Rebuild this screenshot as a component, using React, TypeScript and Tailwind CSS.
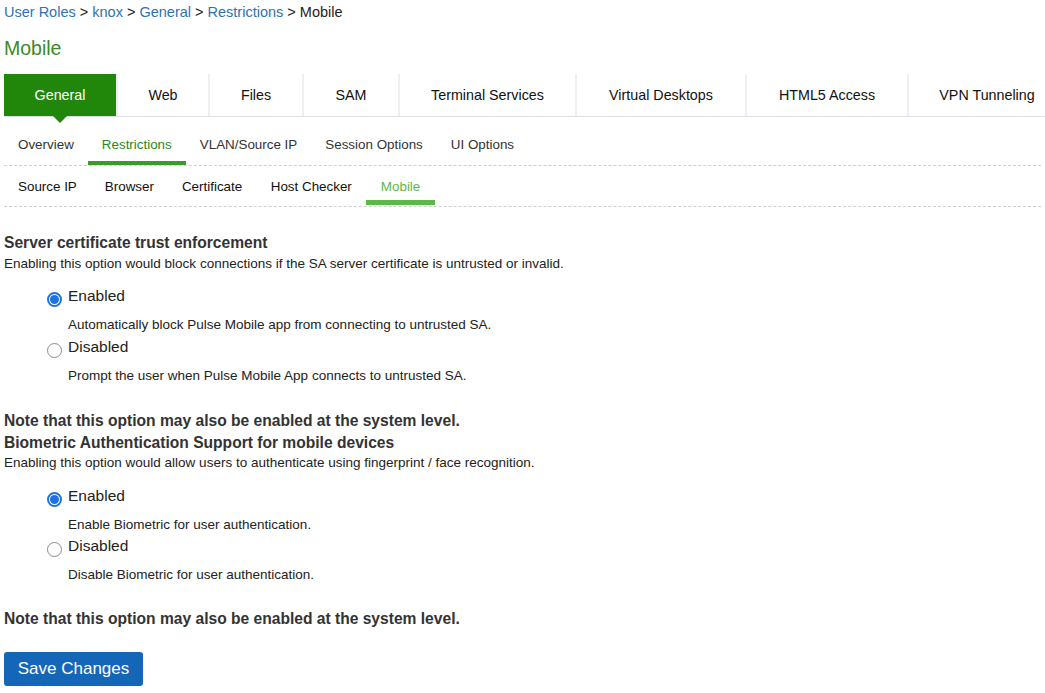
import React from "react";

const tabs = [
  { label: "General", w: 112 },
  { label: "Web", w: 92 },
  { label: "Files", w: 94 },
  { label: "SAM", w: 96 },
  { label: "Terminal Services", w: 177 },
  { label: "Virtual Desktops", w: 170 },
  { label: "HTML5 Access", w: 162 },
  { label: "VPN Tunneling", w: 158 },
];

function Radio({ checked }: { checked: boolean }) {
  return checked ? (
    <span className="mt-[5px] flex h-[15px] w-[15px] shrink-0 items-center justify-center rounded-full border-[2px] border-[#1a73e8] bg-white">
      <span className="h-[9px] w-[9px] rounded-full bg-[#1a73e8]" />
    </span>
  ) : (
    <span className="mt-[5px] h-[15px] w-[15px] shrink-0 rounded-full border border-[#8a8a8a] bg-white" />
  );
}

function Option({ checked, label, help, tight }: { checked: boolean; label: string; help: string; tight?: boolean }) {
  return (
    <div className={tight ? "pb-[3px] pl-[43px]" : "pb-[4px] pl-[43px]"}>
      <div className="flex h-[22px] items-start gap-[6px]">
        <Radio checked={checked} />
        <span className="text-[15.5px] leading-[18px] text-[#222]">{label}</span>
      </div>
      <div className="mt-[7px] pl-[21px] text-[13.5px] leading-[18px] text-[#222]">{help}</div>
    </div>
  );
}

export default function App() {
  return (
    <div className="min-h-[693px] w-[1045px] overflow-hidden bg-white font-['Liberation_Sans',Arial,sans-serif] text-[#222]">
      <div className="px-[4px] pt-[3px] text-[14.5px] leading-[18px]">
        <span className="text-[#2f72b3]">User Roles</span>
        <span> &gt; </span>
        <span className="text-[#2f72b3]">knox</span>
        <span> &gt; </span>
        <span className="text-[#2f72b3]">General</span>
        <span> &gt; </span>
        <span className="text-[#2f72b3]">Restrictions</span>
        <span> &gt; </span>
        <span className="text-[#222]">Mobile</span>
      </div>
      <div className="mt-[16px] px-[4px] text-[19.5px] leading-[22px] text-[#3b8a26]">Mobile</div>

      <div className="mt-[15px] ml-[4px] flex h-[43px] border-b border-[#dcdfe6]">
        {tabs.map((t, i) => (
          <div
            key={t.label}
            style={{ width: t.w }}
            className={
              i === 0
                ? "relative flex shrink-0 items-center justify-center bg-[#21870b] pt-[2px] text-[14.3px] text-white"
                : "flex shrink-0 items-center justify-center border-l-2 border-[#efefef] pt-[2px] text-[14.3px] text-[#111]"
            }
          >
            {t.label}
            {i === 0 && (
              <span className="absolute bottom-[-7px] left-1/2 h-0 w-0 -translate-x-1/2 border-x-[7px] border-t-[7px] border-x-transparent border-t-[#21870b]" />
            )}
          </div>
        ))}
      </div>

      <div className="mx-[4px] flex h-[49px] items-end border-b border-dashed border-[#cfcfcf] text-[13.4px] leading-[16px] text-[#333]">
        <div className="flex h-[32px] items-start px-[14px] pt-[4px]">Overview</div>
        <div className="flex h-[32px] items-start border-b-[4px] border-[#3a9a2a] px-[14px] pt-[4px] text-[#2b8a1c]">Restrictions</div>
        <div className="flex h-[32px] items-start px-[14px] pt-[4px]">VLAN/Source IP</div>
        <div className="flex h-[32px] items-start px-[14px] pt-[4px]">Session Options</div>
        <div className="flex h-[32px] items-start px-[14px] pt-[4px]">UI Options</div>
      </div>

      <div className="mx-[4px] flex h-[41px] items-end border-b border-dashed border-[#cfcfcf] text-[13.4px] leading-[16px] text-[#111]">
        <div className="mb-[1px] flex h-[34px] items-start px-[14px] pt-[8px]">Source IP</div>
        <div className="mb-[1px] flex h-[34px] items-start px-[14px] pt-[8px]">Browser</div>
        <div className="mb-[1px] flex h-[34px] items-start px-[14px] pt-[8px]">Certificate</div>
        <div className="mb-[1px] flex h-[34px] items-start px-[14.5px] pt-[8px]">Host Checker</div>
        <div className="mb-[1px] flex h-[34px] items-start border-b-[5px] border-[#5cb84a] px-[14.5px] pt-[8px] text-[#5cb84a]">Mobile</div>
      </div>

      <div className="px-[4px]">
        <div className="mt-[26px] text-[15.6px] font-bold leading-[20px] text-[#333]">Server certificate trust enforcement</div>
        <div className="mt-[3px] text-[13.5px] leading-[16px] text-[#222]">
          Enabling this option would block connections if the SA server certificate is untrusted or invalid.
        </div>
        <div className="mt-[15px]">
          <Option checked label="Enabled" help="Automatically block Pulse Mobile app from connecting to untrusted SA." />
          <Option checked={false} label="Disabled" help="Prompt the user when Pulse Mobile App connects to untrusted SA." />
        </div>
        <div className="mt-[22px] text-[15.6px] font-bold leading-[20px] text-[#333]">
          Note that this option may also be enabled at the system level.
        </div>
        <div className="mt-[2px] text-[15.6px] font-bold leading-[20px] text-[#333]">Biometric Authentication Support for mobile devices</div>
        <div className="mt-[2px] text-[13.5px] leading-[16px] text-[#222]">
          Enabling this option would allow users to authenticate using fingerprint / face recognition.
        </div>
        <div className="mt-[16px]">
          <Option checked tight label="Enabled" help="Enable Biometric for user authentication." />
          <Option checked={false} tight label="Disabled" help="Disable Biometric for user authentication." />
        </div>
        <div className="mt-[22px] text-[15.6px] font-bold leading-[20px] text-[#333]">
          Note that this option may also be enabled at the system level.
        </div>
        <button className="mt-[23px] h-[34px] w-[139px] rounded-[3px] bg-[#1467b8] text-[17px] text-white">Save Changes</button>
      </div>
    </div>
  );
}
